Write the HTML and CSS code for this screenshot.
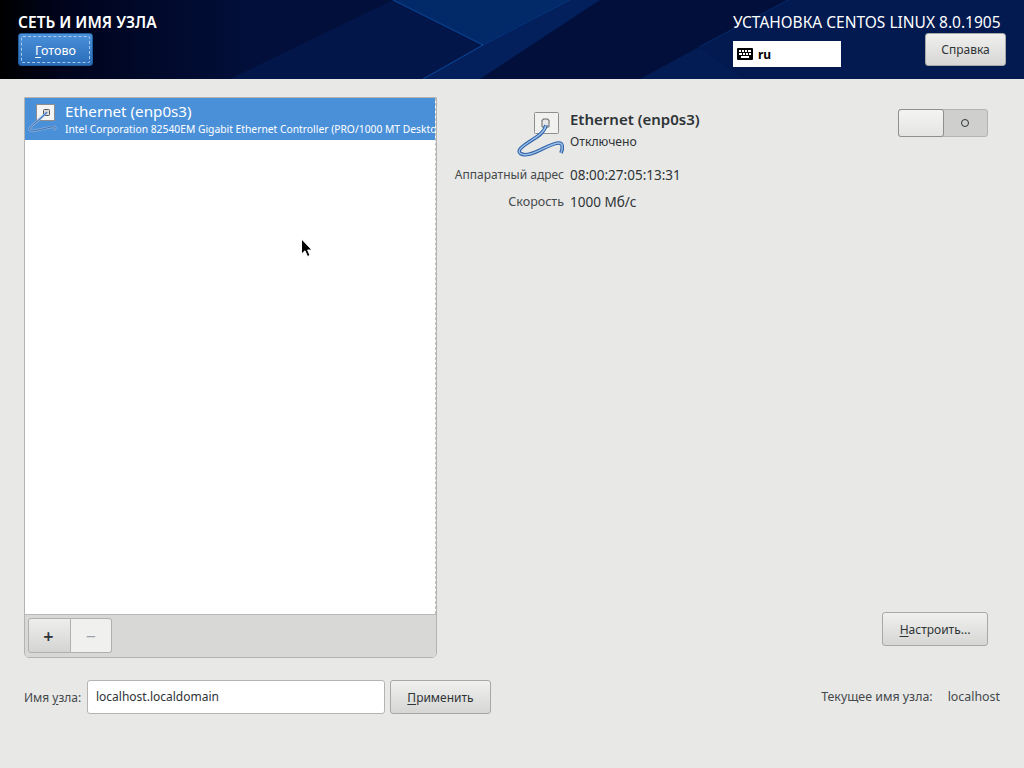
FILE: index.html
```html
<!DOCTYPE html>
<html>

<head>
    <title>Сеть и имя узла</title>
    <link rel="stylesheet" href="styles.css">
</head>

<body>
    <header class="topbar">
        <svg class="topbar-art" viewBox="0 0 1024 79" preserveAspectRatio="none">
            <polygon points="393,0 483,45 570,0" fill="#032a68" />
            <polygon points="393,0 483,45 423,79 230,79" fill="#03164a" />
            <polygon points="483,45 570,0 600,0 480,79 423,79" fill="#03205c" />
            <polygon points="788,0 699,47 745,79 1024,79 1024,0" fill="#031a50" />
            <polygon points="699,47 745,79 640,79" fill="#031c54" />
            <line x1="393" y1="0" x2="483" y2="45" stroke="#0a4a9e" />
            <line x1="483" y1="45" x2="423" y2="79" stroke="#0a4a9e" />
            <line x1="570" y1="0" x2="483" y2="45" stroke="#06357c" />
            <line x1="788" y1="0" x2="699" y2="47" stroke="#052a6c" />
        </svg>
        <div class="topbar-left">
            <h1 class="spoke-title">СЕТЬ И ИМЯ УЗЛА</h1>
            <button class="btn btn-done"><span class="focus-ring"><u>Г</u>отово</span></button>
        </div>
        <div class="topbar-right">
            <div class="product-title">УСТАНОВКА CENTOS LINUX 8.0.1905</div>
            <div class="topbar-controls">
                <div class="layout-field">
                    <svg class="kbd-icon" width="16" height="12" viewBox="0 0 16 12">
                        <rect width="16" height="12" rx="1" fill="#000" />
                        <path d="M2 2h2v2H2zM5 2h2v2H5zM8 2h2v2H8zM11 2h3v2h-3zM2 5h3v2H2zM6 5h2v2H6zM9 5h2v2H9zM12 5h2v2h-2zM4 8h8v2H4z" fill="#fff" />
                    </svg>
                    <span>ru</span>
                </div>
                <button class="btn btn-help">Справка</button>
            </div>
        </div>
    </header>

    <main class="content">
        <div class="columns">
            <section class="device-panel">
                <div class="device-list">
                    <div class="device-row">
                        <svg class="device-icon" width="32" height="32" viewBox="0 0 32 32">
                            <rect x="8.5" y="1.5" width="18" height="16" fill="#f4f4f4" stroke="#8d8d8d" />
                            <rect x="15.5" y="6.5" width="6" height="6" rx="1" fill="#ddd" stroke="#555" />
                            <path d="M19 9C14 15 6 20 2 25C0 28 4 28 10 27C16 26 24 23 27 24C28 25 27 26 25 27" fill="none" stroke="#8eb0dc" stroke-width="2.4" />
                            <path d="M19 9C14 15 6 20 2 25C0 28 4 28 10 27C16 26 24 23 27 24C28 25 27 26 25 27" fill="none" stroke="#3d6fae" stroke-width="1" />
                        </svg>
                        <div class="device-text">
                            <div class="device-name">Ethernet (enp0s3)</div>
                            <div class="device-model">Intel Corporation 82540EM Gigabit Ethernet Controller (PRO/1000 MT Desktop Adapter)</div>
                        </div>
                    </div>
                </div>
                <div class="device-toolbar">
                    <button class="tool-btn tool-add">+</button>
                    <button class="tool-btn tool-remove">−</button>
                </div>
            </section>

            <section class="details">
                <div class="details-top">
                    <div class="details-info">
                        <div class="details-head">
                            <svg class="details-icon" width="48" height="48" viewBox="0 0 48 48">
                                <rect x="17.5" y="2.5" width="24" height="21" rx="1" fill="#f1f1f0" stroke="#8f8f8f" />
                                <path d="M26 9h5v1h1v7h-7v-7h1z" fill="#e8e8e8" stroke="#666" />
                                <path d="M29 15C27 26 12 30 4 38C-1 43 5 46 13 44C22 42 34 33 42 33C46 33 46 38 44 43" fill="none" stroke="#2f62a6" stroke-width="3.6" />
                                <path d="M29 15C27 26 12 30 4 38C-1 43 5 46 13 44C22 42 34 33 42 33C46 33 46 38 44 43" fill="none" stroke="#9cc0ea" stroke-width="1.4" />
                            </svg>
                            <div>
                                <div class="details-name">Ethernet (enp0s3)</div>
                                <div class="details-status">Отключено</div>
                            </div>
                        </div>
                        <dl class="props">
                            <dt>Аппаратный адрес</dt>
                            <dd>08:00:27:05:13:31</dd>
                            <dt class="props-speed">Скорость</dt>
                            <dd>1000 Мб/с</dd>
                        </dl>
                    </div>
                    <div class="switch">
                        <div class="switch-knob"></div>
                        <div class="switch-off"><span class="switch-ring"></span></div>
                    </div>
                </div>
                <div class="details-bottom">
                    <button class="btn btn-config"><u>Н</u>астроить...</button>
                </div>
            </section>
        </div>

        <div class="hostname-row">
            <label class="hostname-label">Имя <u>у</u>зла:</label>
            <input class="hostname-input" type="text" value="localhost.localdomain" />
            <button class="btn btn-apply"><u>П</u>рименить</button>
            <div class="hostname-current">
                <span>Текущее имя узла:</span>
                <span>localhost</span>
            </div>
        </div>
    </main>

    <svg class="cursor" width="14" height="20" viewBox="0 0 14 20">
        <path d="M1.5 1V16L5 12.8L7.5 18.5L10 17.4L7.6 12H12z" fill="#000" stroke="#fff" stroke-width="1" />
    </svg>
</body>

</html>
```

FILE: styles.css
```css
* {
    box-sizing: border-box;
}

html,
body {
    height: 100%;
}

body {
    margin: 0;
    background-color: #e8e8e7;
    color: #2e3436;
    font-family: "Noto Sans", "Open Sans", sans-serif;
    font-size: 12px;
    overflow: hidden;
}

u {
    text-underline-offset: 2px;
}

.topbar {
    position: relative;
    display: flex;
    justify-content: space-between;
    height: 79px;
    padding: 13px 18px 0;
    background: linear-gradient(90deg, #000 0, #00041c 60px, #020f3a 250px, #020f3a 100%);
    color: #fff;
}

.topbar-art {
    position: absolute;
    top: 0;
    left: 0;
    width: 100%;
    height: 100%;
}

.topbar-left,
.topbar-right {
    position: relative;
}

.spoke-title {
    margin: 0 0 2px;
    font-size: 15.5px;
    line-height: 18px;
    font-weight: 600;
    white-space: nowrap;
}

.topbar-right {
    width: 273px;
}

.product-title {
    font-size: 15.5px;
    line-height: 18px;
    white-space: nowrap;
}

.topbar-controls {
    display: flex;
    justify-content: space-between;
    align-items: flex-start;
    margin-top: 2px;
}

.layout-field {
    display: flex;
    align-items: center;
    gap: 5px;
    width: 108px;
    height: 26px;
    margin-top: 8px;
    padding-left: 4px;
    background-color: #fff;
    color: #000;
    font-size: 12px;
    font-weight: 700;
}

.btn {
    display: block;
    height: 33px;
    padding: 0;
    border: 1px solid #a8a8a6;
    border-radius: 3px;
    background: linear-gradient(#f0f0ef, #d6d6d4);
    color: #2e3436;
    font-family: inherit;
    font-size: 12px;
}

.btn-done {
    width: 75px;
    padding: 2px;
    border-color: #215d9c;
    background: linear-gradient(#4a90d9, #2a6cb8);
    color: #fff;
    font-size: 12.5px;
}

.focus-ring {
    display: block;
    height: 100%;
    padding-top: 5px;
    border: 1px dashed #a8cbef;
    border-radius: 2px;
}

.btn-help {
    width: 81px;
}

.content {
    display: flex;
    flex-direction: column;
    height: 689px;
    padding: 18px 24px 0;
}

.columns {
    display: flex;
    height: 561px;
}

.device-panel {
    display: flex;
    flex-direction: column;
    flex: none;
    width: 413px;
    border: 1px solid #b4b4b2;
    border-radius: 0 0 5px 5px;
    background-color: #fff;
    overflow: hidden;
}

.device-list {
    flex: 1;
    border-right: 1px dashed #c4c4c4;
    overflow: hidden;
}

.device-row {
    display: flex;
    height: 42px;
    padding: 5px 0 0 3px;
    background-color: #4a90d9;
    color: #fff;
}

.device-icon {
    flex: none;
    margin-right: 5px;
}

.device-text {
    min-width: 0;
}

.device-name {
    font-size: 15.2px;
    line-height: 17px;
}

.device-model {
    margin-top: 1px;
    font-size: 10.3px;
    line-height: 17px;
    white-space: nowrap;
}

.device-toolbar {
    display: flex;
    flex: none;
    height: 43px;
    padding: 3px;
    border-top: 1px solid #b8b8b6;
    background-color: #d8d8d6;
}

.tool-btn {
    width: 43px;
    height: 35px;
    padding: 0;
    border: 1px solid #b0b0ae;
    font-family: inherit;
    font-size: 18px;
    line-height: 1;
}

.tool-add {
    padding-right: 2px;
    border-radius: 3px 0 0 3px;
    background: linear-gradient(#eeeeed, #d4d4d2);
    color: #2e3436;
    font-weight: 600;
}

.tool-remove {
    width: 41px;
    border-left: none;
    border-radius: 0 3px 3px 0;
    background-color: #f0f0ef;
    color: #a0a2a2;
}

.details {
    display: flex;
    flex-direction: column;
    justify-content: space-between;
    flex: 1;
    padding-right: 12px;
}

.details-top {
    display: flex;
    justify-content: space-between;
}

.details-info {
    padding-top: 12px;
}

.details-head {
    display: flex;
    gap: 5px;
    padding-left: 80px;
}

.details-icon {
    flex: none;
    margin-top: 1px;
}

.details-name {
    font-size: 15px;
    line-height: 20px;
    font-weight: 600;
}

.details-status {
    margin-top: 4px;
    font-size: 12.2px;
    line-height: 18px;
}

.props {
    display: grid;
    grid-template-columns: 127px auto;
    column-gap: 6px;
    row-gap: 9px;
    margin: 8px 0 0;
    line-height: 18px;
}

.props dt {
    text-align: right;
    color: #45494b;
}

.props .props-speed {
    font-size: 12.5px;
}

.props dd {
    margin: 0;
    font-size: 13.5px;
}

.switch {
    display: flex;
    width: 90px;
    height: 28px;
    margin-top: 12px;
    border: 1px solid #b4b4b2;
    border-radius: 3px;
    background-color: #cfcfcd;
}

.switch-knob {
    width: 46px;
    margin: -1px 0 -1px -1px;
    border: 1px solid #8f8f8d;
    border-radius: 3px;
    background: linear-gradient(#f4f4f3, #e4e4e2);
}

.switch-off {
    display: flex;
    flex: 1;
    align-items: center;
    justify-content: center;
    padding-right: 2px;
}

.switch-ring {
    width: 8px;
    height: 8px;
    border: 1px solid #2e3436;
    border-radius: 50%;
}

.details-bottom {
    display: flex;
    justify-content: flex-end;
    margin-bottom: 12px;
}

.btn-config {
    width: 106px;
    height: 34px;
}

.hostname-row {
    display: flex;
    align-items: center;
    height: 34px;
    margin-top: 22px;
}

.hostname-label {
    width: 63px;
    color: #45494b;
}

.hostname-input {
    width: 298px;
    height: 34px;
    padding: 0 8px 2px;
    border: 1px solid #b4b4b2;
    border-radius: 3px;
    background-color: #fff;
    color: #2e3436;
    font-family: inherit;
    font-size: 12px;
}

.btn-apply {
    width: 101px;
    height: 34px;
    margin-left: 5px;
}

.hostname-current {
    display: flex;
    gap: 15px;
    margin-left: auto;
    padding-bottom: 2px;
    color: #45494b;
    font-size: 12.4px;
}

.cursor {
    position: absolute;
    top: 238px;
    left: 300px;
}
```
